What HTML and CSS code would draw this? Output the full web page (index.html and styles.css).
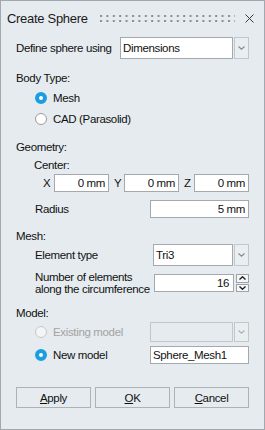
FILE: index.html
```html
<!DOCTYPE html>
<html lang="en">
<head>
    <meta charset="UTF-8">
    <title>Create Sphere</title>
    <link rel="stylesheet" href="styles.css">
</head>
<body>
    <div class="dialog">
        <div class="titlebar">
            <span class="title">Create Sphere</span>
            <svg class="grip" width="135" height="7" viewBox="0 0 135 7">
                <defs>
                    <pattern id="dots" width="6.4" height="5" patternUnits="userSpaceOnUse">
                        <rect x="0" y="0" width="2" height="2" fill="#8c8c8c"/>
                    </pattern>
                </defs>
                <rect width="135" height="7" fill="url(#dots)" shape-rendering="crispEdges"/>
            </svg>
            <svg class="close" width="9" height="9" viewBox="0 0 9 9">
                <path d="M0.5 0.5 L8.5 8.5 M8.5 0.5 L0.5 8.5" stroke="#3a3a3a" stroke-width="1" fill="none"/>
            </svg>
        </div>

        <div class="content">
            <div class="row define">
                <span>Define sphere using</span>
                <div class="combo combo-define">
                    <div class="field">Dimensions</div>
                    <div class="drop"><svg width="7" height="4" viewBox="0 0 7 4"><path d="M0.5 0.5 L3.5 3.2 L6.5 0.5" stroke="#8a8a8a" stroke-width="1.2" fill="none"/></svg></div>
                </div>
            </div>

            <!-- Body type -->
            <div class="heading">Body Type:</div>
            <div class="row option first"><span class="radio on"></span>Mesh</div>
            <div class="row option"><span class="radio"></span>CAD (Parasolid)</div>

            <!-- Geometry -->
            <div class="heading">Geometry:</div>
            <div class="sub">Center:</div>
            <div class="row xyz">
                <span class="axis axis-x">X</span><div class="field num">0 mm</div>
                <span class="axis">Y</span><div class="field num">0 mm</div>
                <span class="axis">Z</span><div class="field num">0 mm</div>
            </div>
            <div class="row radius">
                <span class="indent">Radius</span>
                <div class="field num radius-box">5 mm</div>
            </div>

            <!-- Mesh -->
            <div class="heading">Mesh:</div>
            <div class="row elem">
                <span class="indent">Element type</span>
                <div class="combo combo-elem">
                    <div class="field">Tri3</div>
                    <div class="drop"><svg width="7" height="4" viewBox="0 0 7 4"><path d="M0.5 0.5 L3.5 3.2 L6.5 0.5" stroke="#8a8a8a" stroke-width="1.2" fill="none"/></svg></div>
                </div>
            </div>
            <div class="row count">
                <span class="indent two-line">Number of elements<br>along the circumference</span>
                <div class="spin">
                    <div class="field num">16</div>
                    <div class="spin-btns">
                        <div class="spin-btn"><svg width="7" height="4" viewBox="0 0 7 4"><path d="M0.5 3.5 L3.5 0.8 L6.5 3.5" stroke="#222" stroke-width="1.4" fill="none"/></svg></div>
                        <div class="spin-btn"><svg width="7" height="4" viewBox="0 0 7 4"><path d="M0.5 0.5 L3.5 3.2 L6.5 0.5" stroke="#222" stroke-width="1.4" fill="none"/></svg></div>
                    </div>
                </div>
            </div>

            <!-- Model -->
            <div class="heading">Model:</div>
            <div class="row option existing">
                <span class="radio disabled"></span><span class="muted">Existing model</span>
                <div class="combo combo-model">
                    <div class="field off"></div>
                    <div class="drop"><svg width="7" height="4" viewBox="0 0 7 4"><path d="M0.5 0.5 L3.5 3.2 L6.5 0.5" stroke="#b0b0b0" stroke-width="1.2" fill="none"/></svg></div>
                </div>
            </div>
            <div class="row option newmodel">
                <span class="radio on"></span>New model
                <div class="field model-name">Sphere_Mesh1</div>
            </div>

            <div class="buttons">
                <div class="btn"><u>A</u>pply</div>
                <div class="btn"><u>O</u>K</div>
                <div class="btn"><u>C</u>ancel</div>
            </div>
        </div>
    </div>
</body>
</html>
```

FILE: styles.css
```css
* {
    box-sizing: border-box;
}

body {
    margin: 0;
    font-family: "Liberation Sans", Arial, sans-serif;
    font-size: 11.5px;
    letter-spacing: -0.35px;
    color: #111;
}

.dialog {
    width: 265px;
    height: 430px;
    border: 1px solid #a2a8ad;
    background-color: #e5ebef;
}

/* title bar with grip dots and close cross */
.titlebar {
    height: 35px;
    display: flex;
    align-items: center;
    padding: 0 10px 0 6px;
}

.title {
    font-size: 13px;
    letter-spacing: -0.3px;
    color: #1a1a1a;
}

.grip {
    margin-left: auto;
    margin-right: 10px;
    margin-top: -1px;
}

.close {
    margin-top: -1px;
}

.content {
    padding: 0 15px;
}

.row {
    display: flex;
    align-items: center;
}

.define {
    height: 24px;
}

.heading {
    height: 16px;
    line-height: 16px;
    margin-top: 10px;
}

.sub {
    height: 16px;
    line-height: 16px;
    margin-top: 2px;
    padding-left: 18px;
}

.indent {
    padding-left: 19px;
}

/* radio buttons */
.option {
    height: 21px;
    padding-left: 19px;
}

.option.first {
    margin-top: 1px;
}

.radio {
    width: 12px;
    height: 12px;
    border-radius: 50%;
    border: 1px solid #9a9a9a;
    background-color: #fff;
    margin-right: 6px;
    flex-shrink: 0;
}

.radio.on {
    border: 4px solid #1b9de2;
    background-color: #fff;
}

.radio.disabled {
    border-color: #c6c9cc;
    background-color: #f3f5f7;
}

.muted {
    color: #a3a3a3;
}

/* text fields and combo boxes */
.field {
    height: 100%;
    border: 1px solid #a5a9ad;
    background-color: #fff;
    display: flex;
    align-items: center;
    padding-left: 2px;
    white-space: nowrap;
}

.field.num {
    justify-content: flex-end;
    padding-right: 3px;
}

.field.off {
    background-color: #e5ebef;
    border-color: #c3c7cb;
}

.combo {
    display: flex;
    height: 22px;
    margin-left: auto;
}

.combo .field {
    flex: 1;
}

.drop {
    width: 15px;
    margin-left: 1px;
    border: 1px solid #c3c7cb;
    background-color: #e9eef1;
    display: flex;
    align-items: center;
    justify-content: center;
}

.combo-define {
    width: 129px;
}

.combo-elem {
    width: 96px;
}

.combo-model {
    width: 99px;
    height: 20px;
}

.xyz {
    height: 18px;
    margin-top: 1px;
    padding-left: 27px;
}

.xyz .field {
    width: 55px;
}

.axis {
    width: 10px;
    margin-left: 5px;
}

.axis-x {
    width: 11px;
    margin-left: 0;
}

.radius {
    height: 18px;
    margin-top: 8px;
}

.radius-box {
    width: 99px;
    margin-left: auto;
}

.elem {
    height: 22px;
}

.count {
    height: 24px;
    margin-top: 5px;
}

.two-line {
    line-height: 12px;
}

.spin {
    display: flex;
    height: 18px;
    width: 95px;
    margin-left: auto;
}

.spin .field {
    width: 80px;
    padding-right: 4px;
}

.spin-btns {
    margin-left: 2px;
    width: 13px;
    display: flex;
    flex-direction: column;
    gap: 1px;
}

.spin-btn {
    flex: 1;
    border: 1px solid #9fa3a7;
    background-color: #f4f6f8;
    display: flex;
    align-items: center;
    justify-content: center;
}

.existing {
    height: 20px;
    margin-top: 1px;
}

.newmodel {
    height: 20px;
    margin-top: 3px;
}

.model-name {
    width: 99px;
    height: 18px;
    margin-left: auto;
}

/* bottom buttons */
.buttons {
    margin-top: 22px;
    display: grid;
    grid-template-columns: repeat(3, 1fr);
    gap: 4px;
}

.btn {
    height: 21px;
    border: 1px solid #aeb2b5;
    background-color: #e5ebef;
    display: flex;
    align-items: center;
    justify-content: center;
}
```
